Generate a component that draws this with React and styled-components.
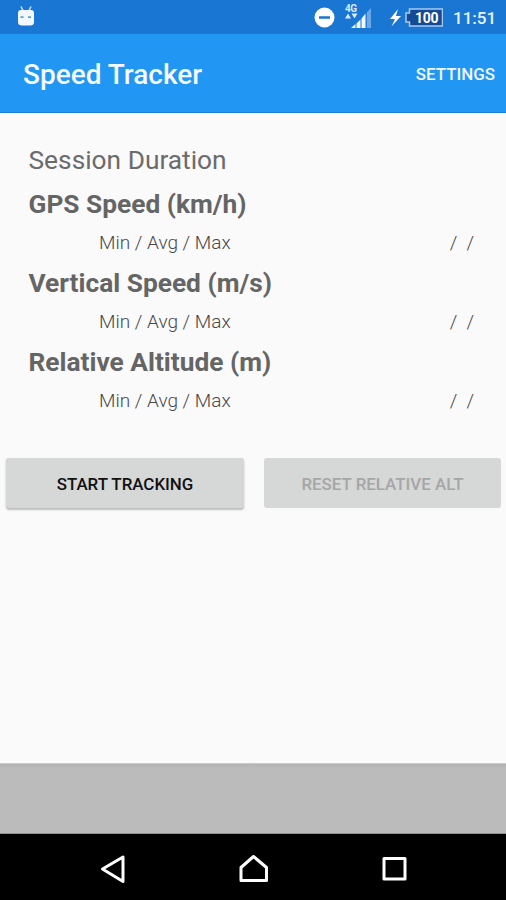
import React from 'react';
import styled, { createGlobalStyle } from 'styled-components';

const GlobalStyle = createGlobalStyle`
  body {
    margin: 0;
    font-family: Roboto, sans-serif;
  }
`;

const Screen = styled.div`
  display: flex;
  flex-direction: column;
  width: 506px;
  height: 900px;
  overflow: hidden;
  background: #fafafa;
`;

const StatusBar = styled.header`
  display: flex;
  align-items: center;
  justify-content: space-between;
  box-sizing: border-box;
  height: 34px;
  padding: 0 11px 0 16px;
  background: #1976d2;
`;

const StatusIcons = styled.div`
  display: flex;
  align-items: center;
`;

const Clock = styled.span`
  width: 42px;
  margin-left: 10px;
  color: #e8f3ff;
  font-size: 17px;
  font-weight: 500;
  line-height: 34px;
  white-space: nowrap;
  padding-top: 2px;
`;

const AppBar = styled.div`
  display: flex;
  align-items: center;
  justify-content: space-between;
  box-sizing: border-box;
  height: 79px;
  padding: 2px 11px 0 23px;
  border-bottom: 1px solid #1b7fd9;
  background: #2196f3;
`;

const Title = styled.h1`
  margin: 0;
  padding-top: 2px;
  color: #f5faff;
  font-size: 28px;
  font-weight: 500;
  line-height: 36px;
`;

const MenuAction = styled.button`
  padding: 0;
  border: 0;
  background: none;
  color: #f0f8ff;
  font: 500 16.9px Roboto, sans-serif;
`;

const Content = styled.main`
  flex: 1;
  padding-top: 23px;
`;

const Heading = styled.div`
  padding-left: 28.5px;
  color: ${({ $bold }) => ($bold ? '#656565' : '#6b6b6b')};
  font-size: 26.3px;
  font-weight: ${({ $bold }) => ($bold ? 700 : 400)};
  line-height: ${({ $bold }) => ($bold ? 40 : 48)}px;
`;

const Stats = styled.div`
  display: flex;
  justify-content: space-between;
  height: 38.8px;
  padding: 0 32px 0 99px;
  color: #484848;
  font-size: 19px;
  font-weight: 300;
  line-height: 37px;
  white-space: pre;
`;

const Buttons = styled.div`
  display: grid;
  grid-template-columns: 238px 237px;
  gap: 20px;
  padding: 37.6px 5px 0 6px;
`;

const Button = styled.button`
  height: 50px;
  padding: 2px 0 0;
  border: 0;
  border-radius: 3px;
  background: #d6d7d7;
  color: #111;
  font: 500 16.9px Roboto, sans-serif;
  box-shadow: 0 2px 2px rgba(0, 0, 0, 0.24), 0 0 1px rgba(0, 0, 0, 0.15);

  &:disabled {
    color: #a5a6a6;
    box-shadow: none;
  }
`;

const AdBanner = styled.div`
  box-sizing: border-box;
  height: 71px;
  border-top: 1px solid #cbcbcb;
  border-bottom: 1px solid #8e8e8e;
  background: linear-gradient(#b2b2b2, #bbb 4px);
`;

const NavBar = styled.nav`
  display: flex;
  justify-content: space-between;
  align-items: center;
  box-sizing: border-box;
  height: 66px;
  padding: 3px 95px 0 96px;
  background: #000;
`;

const sections = ['GPS Speed (km/h)', 'Vertical Speed (m/s)', 'Relative Altitude (m)'];

export default function App() {
  return (
    <Screen>
      <GlobalStyle />
      <StatusBar>
        <DebugIcon />
        <StatusIcons>
          <SystemIcons />
          <Clock>11:51</Clock>
        </StatusIcons>
      </StatusBar>
      <AppBar>
        <Title>Speed Tracker</Title>
        <MenuAction>SETTINGS</MenuAction>
      </AppBar>
      <Content>
        <Heading>Session Duration</Heading>
        {sections.map((name) => (
          <React.Fragment key={name}>
            <Heading $bold>{name}</Heading>
            <Stats>
              <span>Min / Avg / Max</span>
              <span>/  /</span>
            </Stats>
          </React.Fragment>
        ))}
        <Buttons>
          <Button>START TRACKING</Button>
          <Button disabled>RESET RELATIVE ALT</Button>
        </Buttons>
      </Content>
      <AdBanner />
      <NavBar>
        <NavIcon d="M27 5v24.5L6.500 17z" />
        <NavIcon d="M4 28.500V15.500L16.500 4.500L29.500 15.500V28.500z" />
        <NavIcon d="M6 6.500h21v20.500h-21z" />
      </NavBar>
    </Screen>
  );
}

function DebugIcon() {
  return (
    <svg width="20" height="34" viewBox="0 0 20 34">
      <path d="M5 6.500l2 4M15 6.500l-2 4" stroke="#c9dff6" strokeWidth="1.6" />
      <path d="M2 13q0-3 3-3h10q3 0 3 3v9q0 3.500-4 3.500H6q-4 0-4-3.500z" fill="#f2f8ff" />
      <path d="M4.500 17.200h3M12 17.200h3" stroke="#5b9ddd" strokeWidth="1.800" />
    </svg>
  );
}

function SystemIcons() {
  return (
    <svg width="130" height="34" viewBox="313 0 130 34">
      <circle cx="324.500" cy="17.500" r="10" fill="#fff" />
      <path d="M319 17.500h11" stroke="#1976d2" strokeWidth="2.500" />
      <text x="345" y="12" fill="#d8eafc" fontSize="10" fontWeight="700" textLength="12">4G</text>
      <path d="M345 18.500l3-5 3 5zM351.500 13.500h6l-3 5z" fill="#dcecff" />
      <path d="M351 28l4.500-4v4zM356.500 23.500l4-4V28h-4zM361.500 18.500l4-5V28h-4z" fill="#f0f7ff" />
      <path d="M366.800 12.500l4.200-4.500V28h-4.200z" fill="#6ba8e5" />
      <path d="M398 9l-8 10h5l-3.500 7.500L401 16h-5z" fill="#fff" />
      <path d="M409.500 9h33v17h-33v-4H406v-9h3.500z" fill="#154b94" stroke="#a8caf0" strokeWidth="1.500" />
      <text x="415" y="22.500" fill="#fff" fontSize="14" fontWeight="700" textLength="23.500">100</text>
    </svg>
  );
}

function NavIcon({ d }) {
  return (
    <svg width="33" height="33" viewBox="0 0 33 33">
      <path d={d} fill="none" stroke="#fff" strokeWidth="3" strokeLinejoin="round" />
    </svg>
  );
}
